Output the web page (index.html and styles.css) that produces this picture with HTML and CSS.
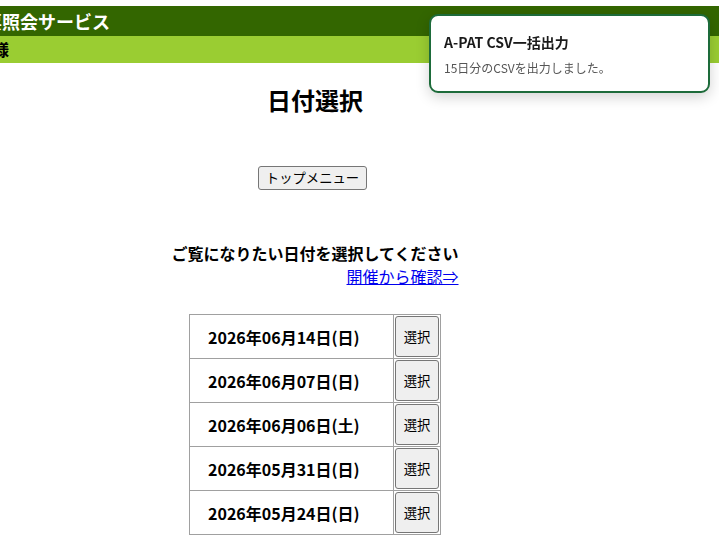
FILE: index.html
```html
<!DOCTYPE html>
<html lang="ja">
<head>
<meta charset="utf-8">
<title>日付選択</title>
<link rel="stylesheet" href="styles.css">
</head>
<body>
<header class="site-header">
  <div class="title-bar"><span class="title-text">投票照会サービス</span></div>
  <div class="user-bar"><span class="user-text">様</span></div>
</header>

<main class="main">
  <h1 class="page-title">日付選択</h1>
  <div class="menu-row">
    <button class="btn btn-menu" type="button">トップメニュー</button>
  </div>
  <div class="intro-row">
    <div class="intro">
      <p class="intro-text">ご覧になりたい日付を選択してください</p>
      <p class="intro-link"><a href="#">開催から確認⇒</a></p>
    </div>
  </div>
  <div class="table-row">
    <table class="date-table">
      <tr><td class="date-cell">2026年06月14日(日)</td><td class="btn-cell"><button class="btn btn-select" type="button">選択</button></td></tr>
      <tr><td class="date-cell">2026年06月07日(日)</td><td class="btn-cell"><button class="btn btn-select" type="button">選択</button></td></tr>
      <tr><td class="date-cell">2026年06月06日(土)</td><td class="btn-cell"><button class="btn btn-select" type="button">選択</button></td></tr>
      <tr><td class="date-cell">2026年05月31日(日)</td><td class="btn-cell"><button class="btn btn-select" type="button">選択</button></td></tr>
      <tr><td class="date-cell">2026年05月24日(日)</td><td class="btn-cell"><button class="btn btn-select" type="button">選択</button></td></tr>
    </table>
  </div>
</main>

<div class="toast" role="status">
  <div class="toast-title">A-PAT CSV一括出力</div>
  <div class="toast-body">15日分のCSVを出力しました。</div>
</div>
</body>
</html>
```

FILE: styles.css
```css
html, body {
  margin: 0;
  padding: 0;
  background: #ffffff;
}

body {
  font-family: "Noto Sans CJK JP", "Noto Sans", sans-serif;
  color: #000000;
  overflow: hidden;
}

.site-header {
  margin-top: 6px;
  overflow: hidden;
}

.title-bar {
  height: 30px;
  background: #336600;
  color: #ffffff;
  font-size: 18px;
  font-weight: bold;
  line-height: 30px;
  white-space: nowrap;
}

.title-text {
  display: inline-block;
  margin-left: -34px;
}

.user-bar {
  height: 27px;
  background: #9acd32;
  font-size: 16px;
  font-weight: bold;
  line-height: 27px;
  white-space: nowrap;
}

.user-text {
  display: inline-block;
  margin-left: -7px;
}

.main {
  width: 630px;
}

.page-title {
  margin: 20px 0 0;
  font-size: 24px;
  line-height: 34px;
  font-weight: bold;
  text-align: center;
}

.menu-row {
  display: flex;
  justify-content: center;
  margin-top: 49px;
}

.btn {
  font-family: "Noto Sans CJK JP", "Noto Sans", sans-serif;
  color: #000000;
  background: #efefef;
  border: 1px solid #767676;
  border-radius: 3px;
  box-sizing: border-box;
  cursor: pointer;
}

.btn-menu {
  height: 24px;
  margin-right: 5px;
  padding: 0 7px;
  font-size: 13.33px;
  line-height: 20px;
}

.intro-row {
  display: flex;
  justify-content: center;
  margin-top: 52px;
}

.intro p {
  margin: 0;
  font-size: 16px;
  line-height: 23px;
}

.intro-text {
  font-weight: bold;
}

.intro-link {
  text-align: right;
}

.intro-link a {
  color: #0000ee;
  text-decoration: underline;
}

.table-row {
  display: flex;
  justify-content: center;
  margin-top: 26px;
}

.date-table {
  border-collapse: collapse;
  border: 1px solid #a0a0a0;
}

.date-table td {
  border: 1px solid #a0a0a0;
  padding: 1px;
}

.date-cell {
  width: 167px;
  padding: 0 18px !important;
  font-size: 16px;
  font-weight: bold;
  white-space: nowrap;
  vertical-align: middle;
}

.btn-cell {
  width: 44px;
  vertical-align: middle;
}

.btn-select {
  display: block;
  width: 44px;
  height: 41px;
  padding: 0;
  font-size: 13.33px;
  line-height: 20px;
}

.toast {
  position: fixed;
  top: 14px;
  right: 9px;
  width: 281px;
  box-sizing: border-box;
  padding: 16px 13px 15px;
  background: #ffffff;
  border: 2px solid #1d6b3a;
  border-radius: 9px;
  box-shadow: 0 4px 14px rgba(0, 0, 0, 0.18);
}

.toast-title {
  font-size: 14px;
  line-height: 20px;
  font-weight: bold;
  color: #1a1a1a;
}

.toast-body {
  margin-top: 7px;
  font-size: 12px;
  line-height: 17px;
  color: #555555;
}
```
